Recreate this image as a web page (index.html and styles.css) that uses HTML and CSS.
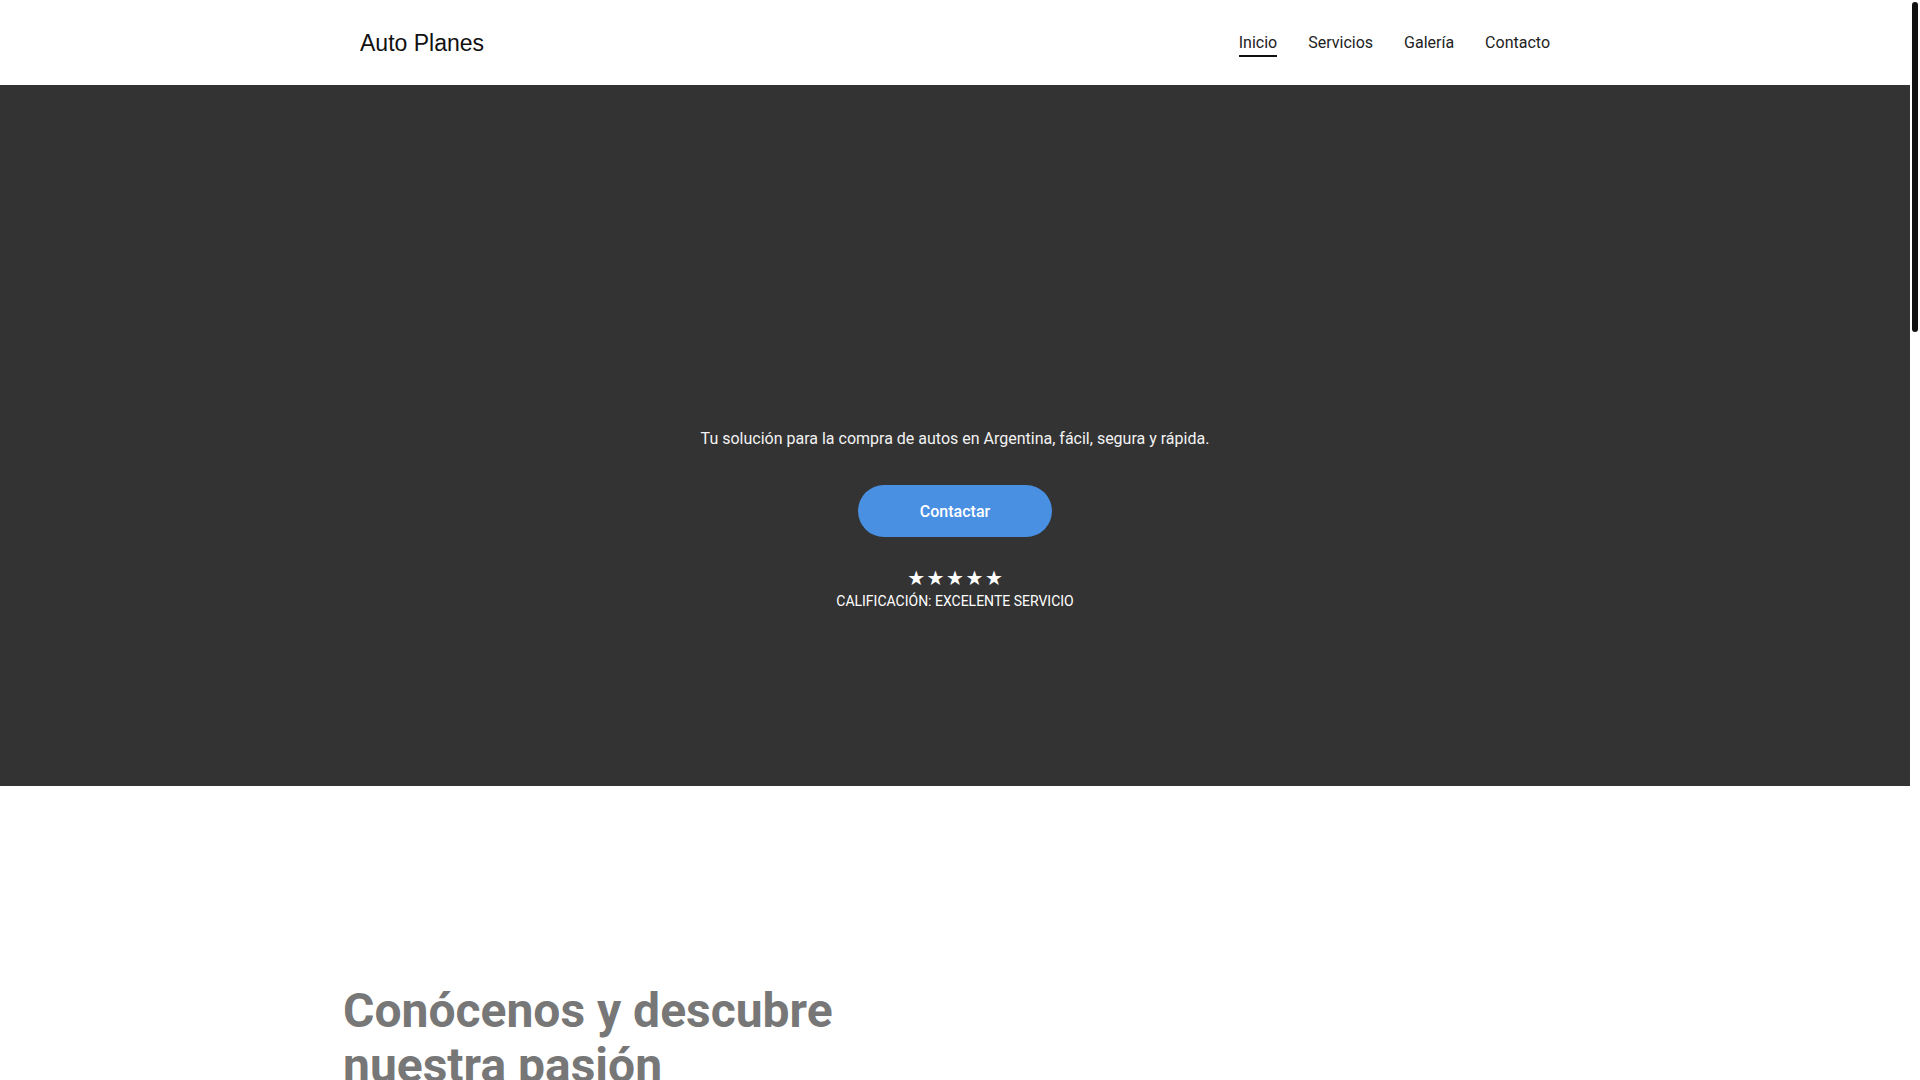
FILE: index.html
```html
<!DOCTYPE html>
<html lang="es">
<head>
<meta charset="utf-8">
<title>Auto Planes</title>
<link rel="stylesheet" href="styles.css">
</head>
<body>
<header class="site-header">
  <div class="header-inner">
    <a class="logo" href="#">Auto Planes</a>
    <nav class="main-nav">
      <a class="nav-link active" href="#">Inicio</a>
      <a class="nav-link" href="#">Servicios</a>
      <a class="nav-link" href="#">Galería</a>
      <a class="nav-link" href="#">Contacto</a>
    </nav>
  </div>
</header>
<section class="hero">
  <p class="hero-text">Tu solución para la compra de autos en Argentina, fácil, segura y rápida.</p>
  <a class="hero-btn" href="#">Contactar</a>
  <div class="stars">★★★★★</div>
  <div class="rating">CALIFICACIÓN: EXCELENTE SERVICIO</div>
</section>
<section class="about">
  <div class="about-inner">
    <h2 class="about-title">Conócenos y descubre nuestra pasión</h2>
    <div class="about-side"></div>
  </div>
</section>
<div class="scrollbar"><div class="scrollbar-thumb"></div></div>
</body>
</html>
```
FILE: styles.css
```css
html {
  overflow-y: hidden;
}
body {
  margin: 0 10px 0 0;
  font-family: Roboto, "Liberation Sans", sans-serif;
  color: #222;
  background: #fff;
}
a {
  text-decoration: none;
  color: inherit;
}
.scrollbar {
  position: fixed;
  top: 0;
  right: 0;
  width: 10px;
  height: 100vh;
  background: #fff;
}
.scrollbar-thumb {
  margin: 2px 2px 0 2px;
  width: 6px;
  height: 330px;
  border-radius: 3px;
  background: #111;
}
.site-header {
  height: 85px;
  background: #fff;
}
.header-inner {
  width: 1190px;
  height: 100%;
  margin: 0 auto;
  display: flex;
  align-items: center;
  justify-content: space-between;
}
.logo {
  font-family: "Liberation Sans", Arial, sans-serif;
  font-size: 23px;
  color: #111;
  padding-top: 2px;
}
.main-nav {
  display: flex;
  gap: 31px;
  align-items: center;
}
.nav-link {
  font-size: 16px;
  line-height: 24px;
  color: #222;
  border-bottom: 2px solid transparent;
  padding-top: 2px;
}
.nav-link.active {
  border-bottom-color: #111;
}
.hero {
  height: 701px;
  box-sizing: border-box;
  background: #333;
  display: flex;
  flex-direction: column;
  align-items: center;
  padding-top: 342px;
  color: #fff;
}
.hero-text {
  margin: 0;
  font-size: 16px;
  line-height: 24px;
  color: #f2f2f2;
}
.hero-btn {
  margin-top: 34px;
  width: 194px;
  height: 52px;
  border-radius: 26px;
  background: #4a90e2;
  color: #fff;
  font-size: 16px;
  font-weight: 500;
  display: flex;
  align-items: center;
  justify-content: center;
}
.stars {
  margin-top: 30px;
  font-family: "DejaVu Sans", sans-serif;
  font-size: 20px;
  line-height: 22px;
  letter-spacing: 1.5px;
  padding-left: 1.5px;
}
.rating {
  margin-top: 3px;
  font-size: 14px;
  font-weight: 400;
  line-height: 18px;
}
.about {
  padding-top: 197px;
  min-height: 2600px;
}
.about-inner {
  width: 1224px;
  margin: 0 auto;
  display: grid;
  grid-template-columns: 1fr 1fr;
}
.about-title {
  margin: 0;
  font-size: 48px;
  font-weight: 700;
  line-height: 55px;
  color: #777;
}
```
